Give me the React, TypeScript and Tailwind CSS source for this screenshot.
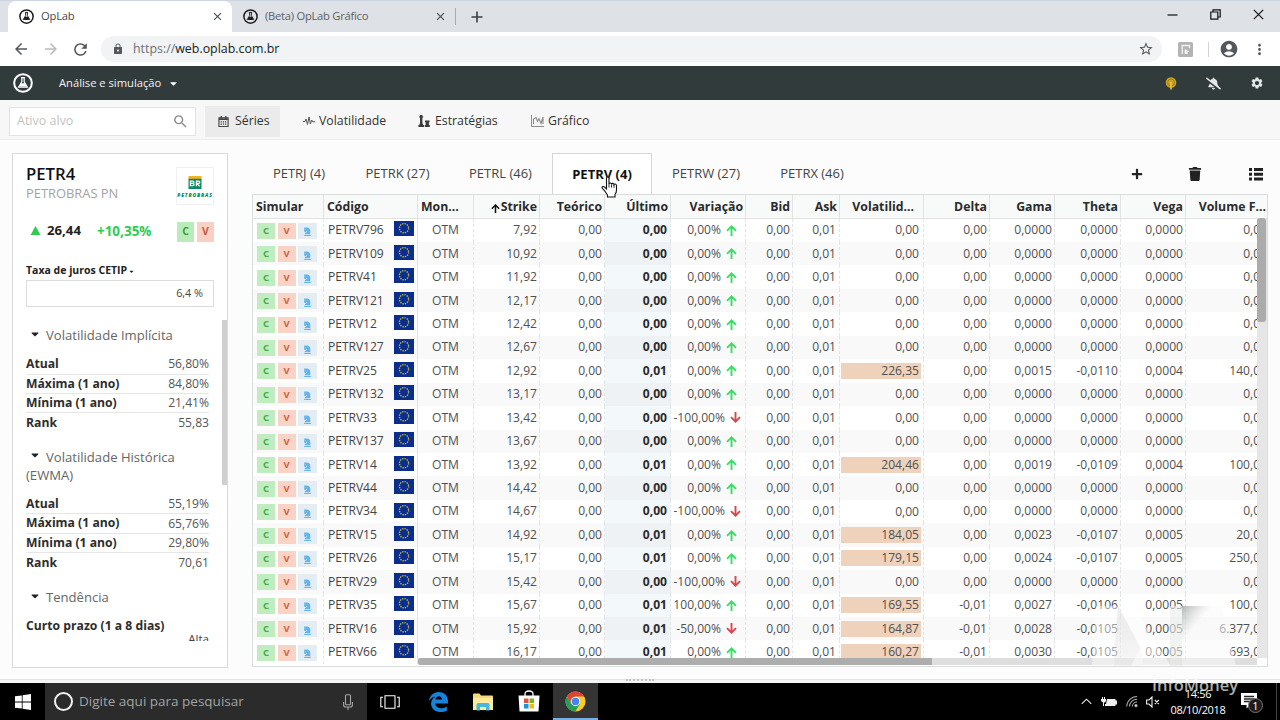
import React from 'react';
import clsx from 'clsx';
import { FaBellSlash, FaCaretDown, FaChessKnight, FaPlus, FaThList, FaTrash } from 'react-icons/fa';
import {
  MdAccountCircle,
  MdArrowBack,
  MdArrowForward,
  MdClose,
  MdLock,
  MdMoreVert,
  MdRefresh,
  MdSearch,
  MdSettings,
  MdStarBorder,
} from 'react-icons/md';

interface Series {
  code: string;
  strike: string;
  last?: string;
  change?: string;
  down?: boolean;
  vol?: string;
  delta?: string;
  gama?: string;
  theta?: string;
  vega?: string;
  volume?: string;
}

const SERIES: Series[] = [
  { code: 'PETRV796', strike: '7,92' },
  { code: 'PETRV109', strike: '10,92' },
  { code: 'PETRV41', strike: '11,92' },
  { code: 'PETRV121', strike: '12,17' },
  { code: 'PETRV12', strike: '12,42' },
  { code: 'PETRV127', strike: '12,67' },
  { code: 'PETRV25', strike: '12,92', last: '0,01', vol: '226,35', gama: '0,0015', theta: '-0,0110', vega: '0,0004', volume: '140,00' },
  { code: 'PETRV132', strike: '13,17' },
  { code: 'PETRV33', strike: '13,42', change: '-100,00%', down: true },
  { code: 'PETRV137', strike: '13,67' },
  { code: 'PETRV14', strike: '13,92', last: '0,01', vol: '204,46', gama: '0,0019', theta: '-0,0109', vega: '0,0004', volume: '100,00' },
  { code: 'PETRV44', strike: '14,42' },
  { code: 'PETRV34', strike: '14,67', change: '-100,00%', down: true },
  { code: 'PETRV15', strike: '14,92', last: '0,01', vol: '184,05', gama: '0,0023', theta: '-0,0107', vega: '0,0005', volume: '20,00' },
  { code: 'PETRV26', strike: '15,17', last: '0,01', vol: '179,15', gama: '0,0024', theta: '-0,0107', vega: '0,0005', volume: '250,00' },
  { code: 'PETRV29', strike: '15,42', change: '-100,00%', down: true },
  { code: 'PETRV35', strike: '15,67', last: '0,01', change: '100,00%', vol: '169,55', delta: '-0,01', gama: '0,0027', theta: '-0,0106', vega: '0,0005', volume: '100,00' },
  { code: 'PETRV16', strike: '15,92', last: '0,01', change: '-50,00%', down: true, vol: '164,87', delta: '-0,01', gama: '0,0028', theta: '-0,0105', vega: '0,0005', volume: '6.377,00' },
  { code: 'PETRV66', strike: '16,17', last: '0,01', vol: '160,27', delta: '-0,01', gama: '0,0030', theta: '-0,0105', vega: '0,0005', volume: '693,00' },
];

const TABS = [
  { label: 'PETRJ (4)', width: 'w-[94px]' },
  { label: 'PETRK (27)', width: 'w-[103px]' },
  { label: 'PETRL (46)', width: 'w-[103px]' },
  { label: 'PETRV (4)', width: 'w-[100px]', active: true },
  { label: 'PETRW (27)', width: 'w-[108px]' },
  { label: 'PETRX (46)', width: 'w-[104px]' },
];

const COLUMNS = [
  { label: 'Simular', className: 'justify-start pl-[3px]' },
  { label: 'Código', className: 'justify-start pl-[3px]' },
  { label: 'Mon...', className: 'justify-start pl-[3px]' },
  { label: 'Strike', className: 'justify-end pr-[2px]', sorted: true },
  { label: 'Teórico', className: 'justify-end pr-[2px]' },
  { label: 'Último', className: 'justify-end pr-[2px]' },
  { label: 'Variação', className: 'justify-end pr-[2px]' },
  { label: 'Bid', className: 'justify-end pr-[2px]' },
  { label: 'Ask', className: 'justify-end pr-[2px]' },
  { label: 'Volatilid...', className: 'justify-end pr-[9px]' },
  { label: 'Delta', className: 'justify-end pr-[2px]' },
  { label: 'Gama', className: 'justify-end pr-[2px]' },
  { label: 'Theta', className: 'justify-end pr-[2px]' },
  { label: 'Vega', className: 'justify-end pr-[2px]' },
  { label: 'Volume F...', className: 'justify-end pr-[1px] border-r-0' },
];

const GRID =
  'grid grid-cols-[71px_94px_56px_66px_65px_66px_75px_47px_47px_84px_66px_65px_66px_65px_81px]';

const Flask: React.FC<{ className?: string }> = ({ className }) => (
  <svg viewBox="0 0 24 24" className={className} fill="none" stroke="currentColor">
    <circle cx="12" cy="12" r="10.6" strokeWidth="2.4" />
    <path d="M9.5 5.5h5M10.6 6v4.5L6.8 16.8h10.4L13.4 10.5V6" strokeWidth="1.5" />
    <path d="M9.7 12.4h4.6l2.2 3.8h-9z" fill="currentColor" stroke="none" />
  </svg>
);

const BrowserTabs: React.FC = () => (
  <div className="flex h-[32px] items-stretch bg-[#dee1e6] text-[11.2px] text-[#45494d] border-t border-[#c9d5e2]">
    <div className="ml-[8px] flex w-[224px] items-center rounded-t-[8px] bg-white pl-[11px] pr-[8px]">
      <Flask className="size-[15px] text-[#1d1d1d]" />
      <span className="ml-[7px] flex-1 tracking-[-0.2px]">OpLab</span>
      <MdClose className="size-[13px]" />
    </div>
    <div className="flex w-[224px] items-center border-r border-[#a9adb2] my-[7px] pl-[11px] pr-[8px]">
      <Flask className="size-[15px] text-[#1d1d1d]" />
      <span className="ml-[7px] flex-1 tracking-[-0.25px] text-[#5c6064]">(Beta) OpLab Gráfico</span>
      <MdClose className="size-[13px]" />
    </div>
    <svg viewBox="0 0 12 12" className="ml-[15px] size-[12px] self-center" stroke="#3c4043" strokeWidth="1.6">
      <path d="M6 0.5v11M0.5 6h11" />
    </svg>
    <div className="ml-auto flex items-center gap-[32px] pr-[16px] pb-[5px] text-[#111]">
      <svg viewBox="0 0 11 11" className="size-[11px]" fill="none" stroke="currentColor" strokeWidth="1.2">
        <path d="M0.5 6h10" />
      </svg>
      <svg viewBox="0 0 11 11" className="size-[11px]" fill="none" stroke="currentColor" strokeWidth="1.2">
        <path d="M0.8 3h7v7.2h-7zM3 3V0.8h7.2V8H8" />
      </svg>
      <svg viewBox="0 0 11 11" className="size-[11px]" fill="none" stroke="currentColor" strokeWidth="1.2">
        <path d="M0.8 0.8l9.4 9.4M10.2 0.8l-9.4 9.4" />
      </svg>
    </div>
  </div>
);

const AddressBar: React.FC = () => (
  <div className="flex h-[34px] items-center bg-white pl-[12px] pr-[12px] text-[#54585c]">
    <MdArrowBack className="size-[18px]" />
    <MdArrowForward className="ml-[12px] size-[18px] text-[#b9bbbe]" />
    <MdRefresh className="ml-[11px] size-[19px]" />
    <div className="ml-[11px] flex h-[26px] w-[1061px] items-center rounded-full bg-[#f1f3f4] pl-[11px] pr-[8px]">
      <MdLock className="size-[12px]" />
      <span className="ml-[9px] flex-1 text-[12.4px] text-[#202124]">
        <span className="text-[#6c7074]">https://</span>web.oplab.com.br
      </span>
      <MdStarBorder className="size-[16px]" />
    </div>
    <svg viewBox="0 0 15 15" className="ml-[16px] size-[15px]">
      <rect width="15" height="15" rx="1.5" fill="#b4b4b4" />
      <path d="M4.2 12V3.5h7.3v2.8" fill="none" stroke="#f0f0f0" strokeWidth="1.4" />
      <path d="M6.6 12V7l5 2.6-2 .6V12z" fill="#f0f0f0" />
    </svg>
    <div className="ml-[15px] h-[15px] w-px bg-[#d0d3d6]" />
    <MdAccountCircle className="ml-[10px] size-[20px]" />
    <MdMoreVert className="ml-[12px] size-[17px]" />
  </div>
);

const AppHeader: React.FC = () => (
  <header className="flex h-[34px] items-center bg-[#323b3c] pl-[13px] pr-[16px] text-white">
    <Flask className="size-[20px]" />
    <span className="ml-[26px] text-[11.2px] text-[#f0f2f2]">Análise e simulação</span>
    <FaCaretDown className="ml-[7px] size-[11px]" />
    <svg viewBox="0 0 12 13" className="ml-auto w-[12px] h-[13px]" fill="none">
      <circle cx="6" cy="5.5" r="5.3" fill="#d0a41c" />
      <circle cx="6" cy="5.5" r="3.4" stroke="#7d6a22" strokeWidth="0.7" />
      <path d="M6 5v7.5" stroke="#e8c34a" strokeWidth="1.6" />
    </svg>
    <FaBellSlash className="ml-[29px] size-[15px] text-[#e3e6e6]" />
    <MdSettings className="ml-[29px] size-[14px] text-[#e3e6e6]" />
  </header>
);

const SubNav: React.FC = () => (
  <nav className="flex h-[40px] items-center border-b border-[#ececec] bg-[#f7f7f7] pl-[9px] pt-[3px] text-[12.3px] text-[#333]">
    <div className="flex h-[29px] w-[187px] items-center border border-[#e2e2e2] bg-white pl-[7px] pr-[6px]">
      <span className="flex-1 text-[12.5px] text-[#c3c3c3]">Ativo alvo</span>
      <MdSearch className="size-[17px] text-[#8b8b8b]" />
    </div>
    <div className="ml-[9px] flex h-[31px] w-[75px] items-center bg-[#ebebeb] pl-[13px]">
      <svg viewBox="0 0 12 13" className="w-[11px] h-[13px]" fill="none" stroke="#444">
        <path d="M1 2.5h10v9.5H1z" strokeWidth="1.2" />
        <path d="M1 4h10" strokeWidth="1.8" />
        <path d="M3.5 0.5v3M8.5 0.5v3" strokeWidth="1.5" />
        <path d="M2.8 7h6.6M2.8 9.4h6.6" strokeDasharray="1.4 1" strokeWidth="1.3" />
      </svg>
      <span className="ml-[6px]">Séries</span>
    </div>
    <div className="ml-[23px] flex w-[85px] items-center">
      <svg viewBox="0 0 12 10" className="w-[12px] h-[10px]" fill="none" stroke="#555" strokeWidth="1">
        <path d="M0 5.5h2l1-2.5 1.5 5.5L6 1l1.4 7 1.3-4 1 1.8H12" />
      </svg>
      <span className="ml-[4px]">Volatilidade</span>
    </div>
    <div className="ml-[30px] flex w-[82px] items-center">
      <svg viewBox="0 0 12 12" className="size-[12px] shrink-0" fill="#3d3d3d">
        <path d="M2 0h2.4v1.2h.8v1.2h-.8v5.6l.8 2H6v2H.4v-2h.8l.8-2V2.4h-.8V1.2H2z" />
        <path d="M7 5.5h4.6v1.6l-.8.6.2 2.3h.8v2H6.8v-2h.8l.2-2.3-.8-.6z" />
      </svg>
      <span className="ml-[5px]">Estratégias</span>
    </div>
    <div className="ml-[31px] flex items-center">
      <svg viewBox="0 0 13 12" className="w-[13px] h-[12px]" fill="none" stroke="#8b8b8b">
        <path d="M0.5 0v11.5H13" strokeWidth="1" />
        <path d="M2.5 9V4l2.5-1.5 1.5 4L8 3.5l2 5L12 2v7" strokeWidth="1.1" />
      </svg>
      <span className="ml-[4px]">Gráfico</span>
    </div>
  </nav>
);

const StatRow: React.FC<{ label: string; value: string; last?: boolean }> = ({ label, value, last }) => (
  <div className={clsx('flex h-[19.4px] items-center justify-between', !last && 'border-b border-[#e6e6e6]')}>
    <span className="text-[12.2px] font-bold text-[#2d2d2d]">{label}</span>
    <span className="text-[12.1px] text-[#555]">{value}</span>
  </div>
);

const SectionTitle: React.FC<{ children: React.ReactNode }> = ({ children }) => (
  <h3 className="text-[13.1px] leading-[18px] text-[#666]">
    <FaCaretDown className="ml-[3px] mr-[5px] inline size-[12px] align-[0.5px] text-[#222]" />
    {children}
  </h3>
);

const Sidebar: React.FC = () => (
  <aside className="flex h-[515px] w-[216px] shrink-0 flex-col border border-[#d9d9d9] bg-white">
    <div className="flex h-[52px] justify-between pl-[13px] pr-[13px] pt-[13px]">
      <div className="-mt-px">
        <h1 className="h-[18px] text-[16.7px] font-semibold leading-[16px] text-[#111]">PETR4</h1>
        <p className="text-[12.9px] leading-[18px] text-[#a3a3a3]">PETROBRAS PN</p>
      </div>
      <div className="flex size-[38px] flex-col items-center border border-[#f0f0f0] pt-[8px]">
        <svg viewBox="0 0 14 14" className="w-[14px] h-[13px]">
          <rect width="14" height="3.5" fill="#f0b429" />
          <rect y="3" width="14" height="11" fill="#0c8a61" />
          <path
            d="M2 10.5V5.5h2.600c1.600 0 1.600 2.300 0 2.400 1.900 0 1.900 2.600 0 2.600zM2.500 7.900h2M8.500 11V5.500h2.500c1.600 0 1.600 2.500 0 2.500H9l3 3"
            fill="none"
            stroke="#fff"
            strokeWidth="1.3"
          />
        </svg>
        <span className="mt-[4px] text-[5px] font-extrabold italic leading-[5px] tracking-[0.8px] text-[#0c8a61]">
          PETROBRAS
        </span>
      </div>
    </div>
    <div className="mt-[14px] flex h-[24px] items-center pl-[17px] pr-[13px] font-bold text-[13.2px]">
      <svg viewBox="0 0 10 9" className="-mt-[4px] w-[11px] h-[9px]">
        <path d="M5 0l5 9H0z" fill="#2ecc52" />
      </svg>
      <span className="-mt-[2px] ml-[6px] text-[#222]">26,44</span>
      <span className="-mt-[2px] ml-[16px] text-[13.5px] text-[#2ecc52]">+10,35%</span>
      <span className="ml-auto flex h-[20px] w-[17px] items-center justify-center bg-[#b9ecb9] text-[10.5px] text-[#3a9e3a]">C</span>
      <span className="ml-[3px] flex h-[20px] w-[17px] items-center justify-center bg-[#f8d0c4] text-[10.5px] text-[#c95a38]">V</span>
    </div>
    <div className="mt-[18px] px-[13px]">
      <label className="flex h-[18px] items-center text-[10.5px] font-bold text-[#222]">
        Taxa de juros CETIP
        <FaCaretDown className="ml-px size-[7px]" />
      </label>
      <div className="flex h-[27px] items-center justify-end border border-[#dcdcdc] pr-[10px] text-[10.8px] text-[#444]">6,4 %</div>
    </div>
    <div className="mt-[11px] flex h-[323px] overflow-hidden">
      <div className="w-[209px] pl-[13px] pr-[13px] pt-[8px]">
        <SectionTitle>Volatilidade Implícita</SectionTitle>
        <div className="pt-[11.3px]">
          <StatRow label="Atual" value="56,80%" />
          <StatRow label="Máxima (1 ano)" value="84,80%" />
          <StatRow label="Mínima (1 ano)" value="21,41%" />
          <StatRow label="Rank" value="55,83" last />
        </div>
        <div className="pt-[15px]">
          <SectionTitle>Volatilidade Histórica (EWMA)</SectionTitle>
        </div>
        <div className="pt-[11.2px]">
          <StatRow label="Atual" value="55,19%" />
          <StatRow label="Máxima (1 ano)" value="65,76%" />
          <StatRow label="Mínima (1 ano)" value="29,80%" />
          <StatRow label="Rank" value="70,61" last />
        </div>
        <div className="pt-[15.500px]">
          <SectionTitle>Tendência</SectionTitle>
        </div>
        <div className="pt-[10px] text-[12.2px]">
          <p className="h-[17px] leading-[19px] font-bold text-[#2d2d2d]">Curto prazo (1 a 8 dias)</p>
          <p className="text-right text-[11.5px] leading-[12px] text-[#444]">Alta</p>
        </div>
      </div>
      <div className="mt-[2px] h-[165px] w-[5px] bg-[#cfcfcf]" />
    </div>
  </aside>
);

const SeriesTabs: React.FC = () => (
  <div className="flex h-[41px] items-stretch text-[13px] text-[#444]">
    {TABS.map((tab) => (
      <div
        key={tab.label}
        className={clsx(
          'flex shrink-0 items-center justify-center whitespace-nowrap pt-px',
          tab.width,
          tab.active && 'border border-b-0 border-[#d6d6d6] bg-white font-bold text-[#111]'
        )}
      >
        {tab.label}
      </div>
    ))}
    <div className="ml-auto flex items-center pr-[5px] pt-px text-[#222]">
      <FaPlus className="size-[12px]" />
      <FaTrash className="ml-[45px] size-[14px]" />
      <svg viewBox="0 0 14 14" className="ml-[47px] size-[14px]" fill="currentColor">
        <path d="M0 1h3v3H0zM5 1h9v3H5zM0 5.700h3v3H0zM5 5.700h9v3H5zM0 10.400h3v3H0zM5 10.400h9v3H5z" />
      </svg>
    </div>
  </div>
);

const EuFlag: React.FC = () => (
  <svg viewBox="0 0 20 15" className="w-[20px] h-[15px]">
    <rect width="20" height="15" fill="#0b2d8c" />
    <circle cx="10" cy="7.2" r="4.6" fill="none" stroke="#b9b54c" strokeWidth="1.4" strokeDasharray="1.4 1" />
  </svg>
);

const ArrowUp: React.FC<{ className?: string }> = ({ className }) => (
  <svg viewBox="0 0 11 11" className={className} fill="none" stroke="currentColor" strokeWidth="1.9">
    <path d="M5.5 11V1.5M1 5.8l4.5-4.5L10 5.8" />
  </svg>
);

const Num: React.FC<{ children: React.ReactNode; className?: string }> = ({ children, className = 'justify-end pr-[2px]' }) => (
  <div className={clsx('flex items-center border-r border-dashed border-[#e3e6e8] whitespace-nowrap', className)}>
    {children}
  </div>
);

const SeriesRow: React.FC<{ row: Series; odd: boolean }> = ({ row, odd }) => {
  const change = row.change ?? '0,00%';
  return (
    <div className={clsx(GRID, 'h-[23.44px] text-[12.1px] text-[#505050]', odd ? 'bg-[#f9f9f9]' : 'bg-white')}>
      <div className="flex items-center gap-[2.5px] border-r border-dashed border-[#e3e6e8] pl-[4px] pt-px text-[9.5px] font-bold">
        <span className="flex h-[16px] w-[18px] items-center justify-center bg-[#c0ecc0] text-[#3fae49]">C</span>
        <span className="flex h-[16px] w-[18px] items-center justify-center bg-[#f8d3c6] text-[#d4603e]">V</span>
        <span className="flex h-[16px] w-[19px] items-center justify-center bg-[#e4ecf4] text-[#62b5ec]">
          <FaChessKnight className="mt-[2px] size-[9px]" />
        </span>
      </div>
      <div className="flex items-center justify-between border-r border-[#dfe3e4] pl-[4px] pr-[3px]">
        <span className="tracking-[-0.05px] text-[#444]">{row.code}</span>
        <span className="-mt-[3px]"><EuFlag /></span>
      </div>
      <Num className="justify-center">OTM</Num>
      <Num>{row.strike}</Num>
      <Num>0,00</Num>
      <Num className={clsx('justify-end pr-[3px] font-bold text-[#2b2b2b]', odd ? 'bg-[#eef2f5]' : 'bg-[#f3f8fb]')}>
        {row.last ?? '0,00'}
      </Num>
      <Num className={clsx('justify-end', change === '-100,00%' ? 'pr-[4px]' : 'pr-[8px]')}>
        {change}
        <ArrowUp className={clsx('ml-[5px] size-[11px]', row.down ? 'rotate-180 text-[#d8474b]' : 'text-[#3ddc66]')} />
      </Num>
      <Num>0,00</Num>
      <Num className="justify-end pr-[3px]">0,01</Num>
      <div className="flex items-center border-r border-dashed border-[#e3e6e8] pr-[2px]">
        <span className={clsx('ml-px flex h-[16px] flex-1 items-center justify-end pr-[2px]', row.vol && 'bg-[#efd2bb]')}>
          {row.vol ?? '0,00'}
        </span>
      </div>
      <Num>{row.delta ?? '0,00'}</Num>
      <Num>{row.gama ?? '0,0000'}</Num>
      <Num>{row.theta ?? '0,0000'}</Num>
      <Num>{row.vega ?? '0,0000'}</Num>
      <Num className="justify-end border-r-0">{row.volume ?? '0,00'}</Num>
    </div>
  );
};

const SeriesTable: React.FC = () => (
  <div className="relative h-[473px] w-[1016px] overflow-hidden border border-[#d9dddd] bg-white">
    <div className={clsx(GRID, 'h-[23.6px] border-b border-[#dfe3e3] bg-[#f8fafa] text-[12.3px] font-bold text-[#2b2b2b]')}>
      {COLUMNS.map((col) => (
        <div key={col.label} className={clsx('flex items-center border-r border-[#dfe3e3] pt-px whitespace-nowrap', col.className)}>
          {col.sorted && <ArrowUp className="mr-px mt-[3px] size-[9px] text-[#111]" />}
          {col.label}
        </div>
      ))}
    </div>
    {SERIES.map((row, i) => (
      <SeriesRow key={row.code} row={row} odd={i % 2 === 1} />
    ))}
    {/* scrollbars lie over the cells */}
    <div className="absolute right-0 top-[23px] h-[440px] w-[10px] bg-[#e6e6e6]">
      <div className="h-[104px] w-[9px] rounded-[3px] bg-[#ababab]" />
    </div>
    <div className="absolute bottom-[1px] left-[165px] right-[10px] h-[7px] bg-[#dedede]">
      <div className="h-[7px] w-[514px] rounded-l-[3px] bg-[#adadad]" />
    </div>
  </div>
);

const Taskbar: React.FC = () => (
  <footer className="flex h-[37px] items-stretch bg-black text-white">
    <div className="flex w-[45px] items-center justify-center">
      <svg viewBox="0 0 16 16" className="size-[16px]" fill="#fff">
        <path d="M0 2.3l6.8-.9v6.2H0zM7.6 1.3L16 0v7.6H7.6zM0 8.4h6.8v6.2L0 13.7zM7.6 8.4H16V16l-8.4-1.2z" />
      </svg>
    </div>
    <div className="flex w-[322px] items-center bg-[#2b2b2b] pl-[9px] pr-[14px]">
      <div className="size-[19px] rounded-full border-[2.5px] border-[#f2f2f2]" />
      <span className="ml-[6px] flex-1 text-[13.5px] text-[#a3a3a3]">Digite aqui para pesquisar</span>
      <svg viewBox="0 0 10 16" className="w-[10px] h-[16px]" fill="none" stroke="#a6a6a6" strokeWidth="1.1">
        <rect x="2.5" y="0.7" width="5" height="10" rx="1" />
        <path d="M0.6 8v3q0 2 2 2h4.8q2 0 2-2V8M5 13v3" />
      </svg>
    </div>
    <div className="flex w-[46px] items-center justify-center">
      <svg viewBox="0 0 20 14" className="w-[20px] h-[14px]" fill="none" stroke="#fff" strokeWidth="1.1">
        <path d="M5 0.7h10v12.6H5zM3 2.2H0.8v9.6H3M17 2.2h2.2v9.6H17" />
      </svg>
    </div>
    <div className="flex w-[50px] items-center justify-center">
      <svg viewBox="0 0 19 20" className="w-[19px] h-[20px]" fill="#1683d8">
        <path d="M0 9C.8 3.5 4.5 0 9.7 0 15.5 0 19 4 19 9.2v2.3H6.3c.2 3.2 2.9 4.7 6 4.7 2.1 0 4-.6 5.6-1.5v4.1c-1.9.9-4.2 1.3-6.5 1.3C5.8 20 2 16.5 2.1 11.6c0-3.2 1.7-5.8 4.4-7.2C3.6 4.8 1.3 6.6 0 9zm6.4-1.4h6.5c0-2-1.2-3.3-3.1-3.3-1.8 0-3.1 1.3-3.4 3.3z" />
      </svg>
    </div>
    <div className="flex w-[40px] items-center justify-center">
      <svg viewBox="0 0 20 18" className="w-[20px] h-[18px]">
        <path d="M0 1.5Q0 .5 1 .5h5.5L8 2.5h11q1 0 1 1V17H0z" fill="#f6d978" />
        <path d="M0 5h20v12H0z" fill="#fdea9f" />
        <path d="M3.5 17.5v-6q0-1.5 1.5-1.5h10q1.5 0 1.5 1.5v6h-3.5v-3.5H7v3.5z" fill="#47b8dc" />
      </svg>
    </div>
    <div className="flex w-[50px] items-center justify-center pb-px pl-px">
      <svg viewBox="0 0 22 22" className="size-[22px]">
        <path d="M7 6V4q0-3 4-3t4 3v2" fill="none" stroke="#fff" strokeWidth="1.3" />
        <path d="M0.5 5.5h21L20.5 21.5h-19z" fill="#fff" />
        <path d="M6 8.5h4.5V13H6z" fill="#e8502f" />
        <path d="M11.5 8.5H16V13h-4.5z" fill="#7bb51a" />
        <path d="M6 14h4.5v4.5H6z" fill="#1a94df" />
        <path d="M11.5 14H16v4.5h-4.5z" fill="#f5b912" />
      </svg>
    </div>
    <div className="flex w-[45px] items-center justify-center border-b-2 border-[#76b0e2] bg-[#343434]">
      <svg viewBox="0 0 22 22" className="mt-px size-[21px]">
        <circle cx="11" cy="11" r="10.5" fill="#fbcb2c" />
        <path d="M1.9 5.8A10.5 10.5 0 0 1 20.1 5.8H11L6.5 13.6z" fill="#db4437" />
        <path d="M1.9 5.8A10.5 10.5 0 0 0 10.8 21.5l4.8-8-9.1.1z" fill="#269d5b" />
        <circle cx="11" cy="11" r="5" fill="#f4f4f4" />
        <circle cx="11" cy="11" r="3.9" fill="#4285f4" />
      </svg>
    </div>
    <div className="ml-auto flex items-center pr-[3px]">
      <svg viewBox="0 0 12 7" className="w-[11px] h-[7px]" fill="none" stroke="#eee" strokeWidth="1.2">
        <path d="M0.8 6.2L6 1l5.2 5.2" />
      </svg>
      <svg viewBox="0 0 16 12" className="ml-[9px] w-[16px] h-[12px]" fill="#eee">
        <path d="M6 3h8.5v1.5H16v4h-1.5V10H4V8h1zM1 1h1v2h1V1h1v2h1v2L4 6.5H3V10H2V6.500L0 5V3h1z" />
      </svg>
      <svg viewBox="0 0 13 13" className="ml-[9px] w-[12px] h-[13px]" fill="none" stroke="#aaa" strokeWidth="1.1">
        <path d="M0.8 12A11.2 11.2 0 0 1 12 1M3.8 12A8 8 0 0 1 12 4M6.8 12A5 5 0 0 1 12 7" />
        <circle cx="10.8" cy="11" r="1.2" fill="#eee" />
      </svg>
      <svg viewBox="0 0 14 12" className="ml-[8px] w-[14px] h-[12px]" fill="none" stroke="#eee" strokeWidth="1.1">
        <path d="M0.6 4H3l3-3v10L3 8H0.6zM8.8 4l4 4M12.8 4l-4 4" />
      </svg>
      <div className="ml-[8px] flex w-[60px] flex-col items-center text-[11px] leading-[16px] tracking-[-0.35px]">
        <span>14:56</span>
        <span>08/10/2018</span>
      </div>
      <div className="relative ml-[13px] h-[22px] w-[24px]">
        <svg viewBox="0 0 16 16" className="mt-[2px] size-[16px]">
          <path d="M0 0h16v12H9l-3.5 3.5V12H0z" fill="#fff" />
          <path d="M3 3.5h10M3 6h10M3 8.5h6" stroke="#222" strokeWidth="1.3" />
        </svg>
        <span className="absolute left-[7px] top-[7px] flex size-[15px] items-center justify-center rounded-full border border-[#777] bg-[#1c1c1c] text-[11px] leading-none">
          1
        </span>
      </div>
      <div className="ml-[11px] h-full w-px bg-[#444]" />
    </div>
  </footer>
);

const HandCursor: React.FC = () => (
  <svg viewBox="0 0 17 22" className="absolute left-[601px] top-[176px] w-[17px] h-[22px]">
    <path
      d="M5.5 2.3Q5.5 1 6.7 1T8 2.3V8q.2-1 1.3-1t1.2 1.2q.3-.8 1.3-.8t1.2 1.2q.3-.6 1.2-.6t1.3 1.4V14q0 2.5-1.5 4.5V21H6.5v-2Q5 17 3.5 14.5L1.3 12.3Q.6 11 1.7 10.6q1-.3 2 .6L5.5 13z"
      fill="#fff"
      stroke="#111"
      strokeWidth="1.1"
    />
    <path d="M8 8v3.5M10.5 8.5v3M13 9v2.8" stroke="#111" strokeWidth="0.9" />
  </svg>
);

// broadcaster logo, drawn over the bottom right corner of the screen
const Watermark: React.FC = () => (
  <div className="absolute left-[1088px] top-[604px] h-[92px] w-[160px]">
    <svg viewBox="0 0 160 64" className="absolute left-0 top-0 h-[64px] w-[160px]">
      <defs>
        <linearGradient id="fold" x1="0" y1="0" x2="0.55" y2="0.5">
          <stop offset="0" stopColor="#a3a9a5" stopOpacity="0.85" />
          <stop offset="1" stopColor="#f6f7f6" stopOpacity="0.5" />
        </linearGradient>
        <linearGradient id="leg" x1="0" y1="0" x2="0" y2="1">
          <stop offset="0" stopColor="#dfe2e0" stopOpacity="0.6" />
          <stop offset="1" stopColor="#eef0ee" stopOpacity="0.6" />
        </linearGradient>
      </defs>
      <path d="M4 62L8 2h21l-3 60z" fill="#fff" fillOpacity="0.45" />
      <path d="M30 2l23 42 2 18H25z" fill="url(#leg)" />
      <path d="M31 2h14l38 60H43l9-18z" fill="#fff" fillOpacity="0.5" />
      <path d="M82 2h12v60H82z" fill="#e9ecea" fillOpacity="0.6" />
      <path d="M94 2h30L97 34h-3z" fill="url(#fold)" />
      <path d="M124 2h10L148 62H94V34h3z" fill="#f8faf8" fillOpacity="0.55" />
    </svg>
    <span className="absolute left-[64px] top-[70px] text-[16.5px] font-semibold leading-[22px] tracking-[0.05px] text-white/70">
      InfoMoney
    </span>
  </div>
);

const App: React.FC = () => (
  <div className="relative flex h-[720px] w-[1280px] flex-col overflow-hidden bg-[#fcfcfc] font-['Open_Sans',sans-serif]">
    <BrowserTabs />
    <AddressBar />
    <AppHeader />
    <SubNav />
    <main className="flex flex-1 items-start gap-[24px] pl-[12px] pt-[13px]">
      <Sidebar />
      <section className="w-[1016px]">
        <SeriesTabs />
        <SeriesTable />
      </section>
    </main>
    <div className="flex h-[4px] justify-center border-t border-[#e4e4e4] bg-[#f6f6f6]">
      <div className="-mt-px w-[28px] border-t-2 border-dotted border-[#c4c4c4]" />
    </div>
    <Taskbar />
    <HandCursor />
    <Watermark />
  </div>
);

export default App;
